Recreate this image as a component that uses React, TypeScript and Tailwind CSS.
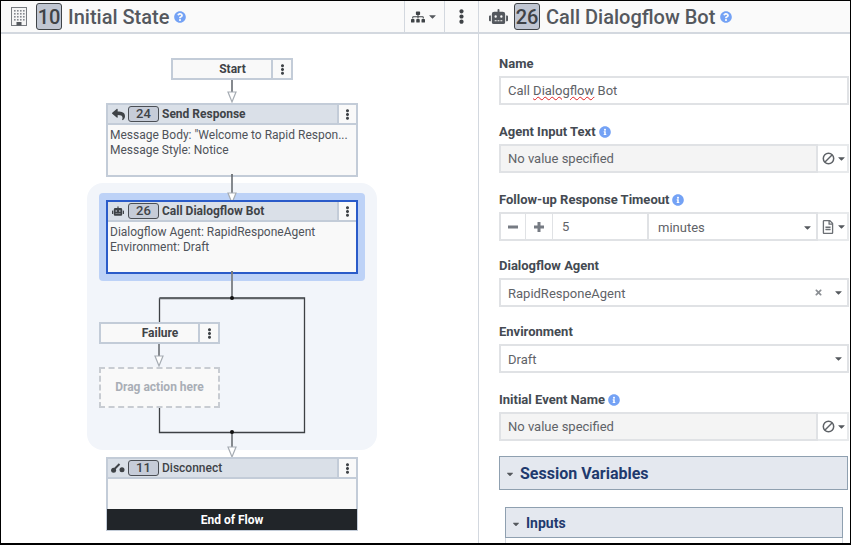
import type { ReactNode } from "react";
import {
  FaCaretDown,
  FaEllipsisV,
  FaInfoCircle,
  FaQuestionCircle,
  FaRegFileAlt,
  FaReply,
  FaRobot,
  FaSitemap,
  FaTimes,
} from "react-icons/fa";

function Kebab({ size = 11 }: { size?: number }) {
  return <FaEllipsisV size={size} color="#3f4347" />;
}

function Caret() {
  return <FaCaretDown size={11} color="#55595e" />;
}

function BuildingIcon() {
  const columns = [3.5, 6.5, 9.5, 12.5];
  const rows = [3.5, 6.5, 9.5, 12.5];
  return (
    <svg width="16" height="19" viewBox="0 0 16 19" className="ml-[10px] mr-[9px] shrink-0">
      <rect x="0.5" y="0.5" width="15" height="18" fill="#f5f5f5" stroke="#777b80" />
      {rows.map((y) =>
        columns.map((x) => <rect key={`${x}-${y}`} x={x - 0.5} y={y - 0.5} width="1.6" height="1.6" fill="#85898f" />)
      )}
      <rect x="5.5" y="15" width="5" height="3.5" fill="#55595e" />
    </svg>
  );
}

function DisconnectIcon() {
  return (
    <svg width="14" height="10" viewBox="0 0 14 10">
      <circle cx="2.6" cy="7.2" r="2.5" fill="#3f4347" />
      <path d="M3 6.5 L8.5 1" stroke="#3f4347" strokeWidth="2" />
      <circle cx="11" cy="6.8" r="2.5" fill="#3f4347" />
    </svg>
  );
}

function BanIcon() {
  return (
    <svg width="13" height="13" viewBox="0 0 13 13" fill="none" stroke="#5f6368" strokeWidth="1.5">
      <circle cx="6.5" cy="6.5" r="5.2" />
      <path d="M3 10 L10 3" />
    </svg>
  );
}

function MinusIcon() {
  return (
    <svg width="10" height="10" viewBox="0 0 10 10">
      <rect x="0" y="3.5" width="10" height="3" fill="#767b83" />
    </svg>
  );
}

function PlusIcon() {
  return (
    <svg width="10" height="10" viewBox="0 0 10 10">
      <path d="M3.5 0 H6.5 V3.5 H10 V6.5 H6.5 V10 H3.5 V6.5 H0 V3.5 H3.5 Z" fill="#767b83" />
    </svg>
  );
}

function Badge({ value }: { value: string }) {
  return (
    <span className="flex h-[16px] w-[31px] shrink-0 items-center justify-center rounded-[3px] border border-[#4a4e54] bg-[#c6ccd8] text-[13px] font-medium text-[#3f4347]">
      {value}
    </span>
  );
}

function ActionNode({
  className,
  icon,
  id,
  title,
  selected,
  medium,
  children,
}: {
  className: string;
  icon: ReactNode;
  id: string;
  title: string;
  selected?: boolean;
  medium?: boolean;
  children?: ReactNode;
}) {
  return (
    <div
      className={`absolute flex h-[74px] w-[252px] flex-col border-2 bg-[#f9f9f9] ${
        selected ? "border-[#2a5bc9]" : "border-[#c3ccd8]"
      } ${className}`}
    >
      <div className="flex h-[20px] shrink-0 items-center border-b-2 border-[#c3ccd8] bg-[#dae0e8]">
        <span className="flex w-[20px] shrink-0 justify-center">{icon}</span>
        <Badge value={id} />
        <span className={`ml-[3px] flex-1 text-[12px] text-[#3f4347] ${medium ? "font-medium" : "font-bold"}`}>{title}</span>
        <span className="flex h-full w-[19px] items-center justify-center border-l-2 border-[#c3ccd8] bg-[#f9f9f9]">
          <Kebab />
        </span>
      </div>
      {children}
    </div>
  );
}

function NodeBody({ lines }: { lines: string[] }) {
  return (
    <div className="px-[2px] pt-[3px] text-[12px] leading-[15px] text-[#4f5359]">
      {lines.map((line) => (
        <div key={line} className="truncate">
          {line}
        </div>
      ))}
    </div>
  );
}

function LabelNode({ className, label }: { className: string; label: string }) {
  return (
    <div className={`absolute flex h-[22px] border-2 border-[#c3ccd8] bg-[#f9f9f9] ${className}`}>
      <span className="flex-1 pl-[21px] text-center text-[12px] font-bold leading-[18px] text-[#3f4347]">{label}</span>
      <span className="flex w-[20px] items-center justify-center border-l-2 border-[#c3ccd8]">
        <Kebab />
      </span>
    </div>
  );
}

function Connectors() {
  const arrow = (x: number, y: number) => `M${x - 4} ${y} L${x + 4} ${y} L${x} ${y + 10} Z`;
  return (
    <svg className="absolute left-0 top-0" width="477" height="509" viewBox="1 34 477 509" fill="none">
      <path d="M232 80 V93 M232 177 V194 M232 274 V298 M232 432 V448 M159 344 V357" stroke="#85898e" strokeWidth="2" />
      <path d="M159.5 298 H304.5 V432.5 H159.5 V408 M159.5 298 V322" stroke="#3d4044" strokeWidth="1.3" />
      <path d="M159 298.5 H304" stroke="#5c6064" strokeWidth="1.6" />
      <circle cx="232" cy="298" r="2" fill="#111" />
      <circle cx="232" cy="432" r="2" fill="#111" />
      <g fill="#fff" stroke="#a6acb3" strokeWidth="1.2">
        <path d={arrow(232, 92)} />
        <path d={arrow(232, 193)} />
        <path d={arrow(232, 447)} />
        <path d={arrow(159, 356)} />
      </g>
    </svg>
  );
}

function PanelHeader({ icon, id, title, children }: { icon: ReactNode; id: string; title: string; children?: ReactNode }) {
  return (
    <div className="flex h-[33px] shrink-0 items-center border-b-2 border-[#d3d8df] bg-[#fafafa] text-[#54585e]">
      {icon}
      <span className="flex h-[27px] w-[26px] shrink-0 items-center justify-center rounded-[3px] border border-[#3f4347] bg-[#c0c6d2] text-[20px] font-medium leading-none text-[#3f4347]">
        {id}
      </span>
      <span className="ml-[6px] text-[20px] font-medium leading-none">{title}</span>
      <FaQuestionCircle size={12} color="#74a2f5" className="ml-[5px]" />
      {children}
    </div>
  );
}

function Field({ label, info, tight, children }: { label: string; info?: boolean; tight?: boolean; children: ReactNode }) {
  return (
    <div className={tight ? "mb-[15px]" : "mb-[17px]"}>
      <div className="mb-[4px] flex h-[18px] items-center gap-[3px] pt-[2px] text-[13px] font-bold text-[#444a52]">
        {label}
        {info && <FaInfoCircle size={12} color="#74a2f5" />}
      </div>
      {children}
    </div>
  );
}

function TextBox({ children, right, lower }: { children: ReactNode; right?: ReactNode; lower?: boolean }) {
  return (
    <div className="flex h-[29px] items-center border-2 border-[#e0e2e5] bg-white pl-[7px] text-[13px] text-[#5f6368]">
      <span className={lower ? "flex-1 pt-[2px]" : "flex-1"}>{children}</span>
      {right}
    </div>
  );
}

function NoValueBox() {
  return (
    <div className="flex h-[29px] text-[13px] text-[#5f6368]">
      <div className="flex flex-1 items-center border-2 border-[#e0e2e5] bg-[#f4f4f4] pl-[7px]">No value specified</div>
      <div className="flex w-[31px] items-center gap-[1px] border-y-2 border-r-2 border-[#e8eaec] bg-white pl-[4px]">
        <BanIcon />
        <Caret />
      </div>
    </div>
  );
}

export default function App() {
  return (
    <div className="flex h-[545px] w-[851px] overflow-hidden border-b-2 border-l border-r border-t border-black bg-white font-['Roboto',sans-serif]">
      {/* flow canvas */}
      <div className="flex w-[478px] shrink-0 flex-col border-r border-[#d3d8df]">
        <PanelHeader icon={<BuildingIcon />} id="10" title="Initial State">
          <div className="ml-auto mr-px flex h-full">
            <span className="flex w-[40px] items-center justify-center gap-[2px] border-l border-[#d3d8df]">
              <FaSitemap size={14} color="#3f4347" />
              <Caret />
            </span>
            <span className="flex w-[33px] items-center justify-center border-l border-[#d3d8df]">
              <FaEllipsisV size={15} color="#3f4347" />
            </span>
          </div>
        </PanelHeader>
        <div className="relative flex-1">
          <div className="absolute left-[86px] top-[149px] h-[267px] w-[290px] rounded-[16px] bg-[#f2f5fa]" />
          <div className="absolute left-[98px] top-[159px] h-[88px] w-[266px] rounded-[4px] bg-[#bdd2f7]" />
          <Connectors />
          <LabelNode className="left-[170px] top-[24px] w-[122px]" label="Start" />
          <ActionNode className="left-[105px] top-[69px]" icon={<FaReply size={13} color="#3f4347" />} id="24" title="Send Response">
            <NodeBody lines={['Message Body: "Welcome to Rapid Respon...', "Message Style: Notice"]} />
          </ActionNode>
          <ActionNode className="left-[105px] top-[166px]" selected icon={<FaRobot size={12} color="#3f4347" />} id="26" title="Call Dialogflow Bot">
            <NodeBody lines={["Dialogflow Agent: RapidResponeAgent", "Environment: Draft"]} />
          </ActionNode>
          <LabelNode className="left-[98px] top-[288px] w-[121px]" label="Failure" />
          <div className="absolute left-[98px] top-[333px] flex h-[41px] w-[121px] items-center justify-center border-2 border-dashed border-[#c8ccd2] bg-[#f9f9f9] pb-[2px] text-[12px] font-bold text-[#a9aeb6]">
            Drag action here
          </div>
          <ActionNode className="left-[105px] top-[423px]" medium icon={<DisconnectIcon />} id="11" title="Disconnect">
            <div className="flex-1" />
            <div className="-mx-px -mb-px flex h-[21px] items-center justify-center bg-[#212529] text-[12px] font-bold text-white">End of Flow</div>
          </ActionNode>
          {/* ports sit on top of the node borders */}
          <div className="absolute left-[230px] top-[140px] h-[3px] w-[2px] bg-[#777b80]" />
          <div className="absolute left-[230px] top-[237px] h-[3px] w-[2px] bg-[#777b80]" />
        </div>
      </div>

      {/* properties panel */}
      <div className="flex min-w-0 flex-1 flex-col">
        <PanelHeader icon={<FaRobot size={19} color="#54585e" className="ml-[10px] mr-[6px]" />} id="26" title="Call Dialogflow Bot" />
        <div className="flex-1 overflow-hidden pl-[20px] pr-px pt-[20px]">
          <Field label="Name">
            <TextBox>
              Call <span className="underline decoration-[#e02020] decoration-wavy decoration-1">Dialogflow</span> Bot
            </TextBox>
          </Field>
          <Field label="Agent Input Text" info>
            <NoValueBox />
          </Field>
          <Field label="Follow-up Response Timeout" info tight>
            <div className="flex h-[29px] text-[13px] text-[#5f6368]">
              <span className="flex w-[27px] items-center justify-center border-2 border-r border-[#e0e2e5]">
                <MinusIcon />
              </span>
              <span className="flex w-[27px] items-center justify-center border-y-2 border-r border-[#e0e2e5]">
                <PlusIcon />
              </span>
              <span className="flex w-[96px] items-center border-y-2 border-r-2 border-[#e0e2e5] pl-[9px]">5</span>
              <span className="flex flex-1 items-center justify-between border-y-2 border-r-2 border-[#e0e2e5] pl-[9px] pr-[3px] pt-[2px]">
                minutes
                <Caret />
              </span>
              <span className="flex w-[31px] items-center gap-[1px] border-y-2 border-r-2 border-[#e8eaec] pl-[3px]">
                <FaRegFileAlt size={14} color="#6b6f74" />
                <Caret />
              </span>
            </div>
          </Field>
          <Field label="Dialogflow Agent" tight>
            <TextBox
              lower
              right={
                <span className="flex items-center gap-[10px] pr-[3px]">
                  <FaTimes size={9} color="#8a8e93" />
                  <Caret />
                </span>
              }
            >
              RapidResponeAgent
            </TextBox>
          </Field>
          <Field label="Environment">
            <TextBox lower right={<span className="pr-[3px]"><Caret /></span>}>Draft</TextBox>
          </Field>
          <Field label="Initial Event Name" info tight>
            <NoValueBox />
          </Field>
          <div className="mr-px flex h-[34px] items-center border border-[#8fa0b0] bg-[#e4e8ef] pl-[5px] pt-[2px] text-[16px] font-bold text-[#1f3a6e]">
            <FaCaretDown size={10} color="#55595e" className="mr-[5px]" />
            Session Variables
          </div>
          <div className="mx-[6px] mt-[17px] flex h-[31px] items-center border border-[#8fa0b0] bg-[#e4e8ef] pl-[5px] pt-[2px] text-[14px] font-bold text-[#1f3a6e]">
            <FaCaretDown size={10} color="#55595e" className="mr-[5px]" />
            Inputs
          </div>
          <div className="mx-[6px] h-[8px] border-x border-[#d3d8df]" />
        </div>
      </div>
    </div>
  );
}
